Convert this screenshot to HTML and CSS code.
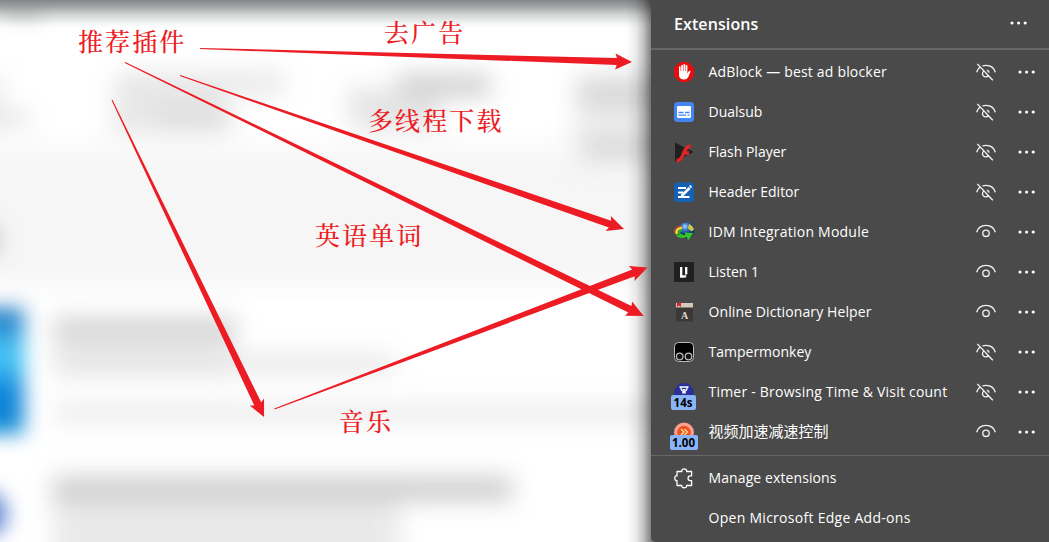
FILE: index.html
```html
<!DOCTYPE html>
<html lang="en">
<head>
<meta charset="utf-8">
<title>Extensions</title>
<link rel="stylesheet" href="styles.css">
</head>
<body>
<svg class="defs" width="0" height="0" aria-hidden="true">
  <symbol id="dots" viewBox="0 0 18 4"><circle cx="2" cy="2" r="1.55"/><circle cx="8.6" cy="2" r="1.55"/><circle cx="15.2" cy="2" r="1.55"/></symbol>
  <symbol id="eye" viewBox="0 0 22 20"><path d="M1.700 10.300C3 5.600 6.500 3.300 11 3.300s8 2.300 9.300 7"/><circle cx="11" cy="11.300" r="3.200"/></symbol>
  <symbol id="eye-off" viewBox="0 0 22 20"><path d="M1.700 10.300C2.300 8.200 3.400 6.500 4.900 5.300M7.500 3.900C8.600 3.500 9.800 3.300 11 3.300c4.500 0 8 2.300 9.300 7M2.300 1.900L17.800 18.200M8.900 9A3.200 3.200 0 1 0 13.300 13.500M11.800 8.200A3.200 3.200 0 0 1 14.100 10.600"/></symbol>
</svg>
<main class="screen">
  <section class="page">
    <svg class="backdrop" viewBox="0 0 651 542" aria-hidden="true">
      <defs>
        <filter id="soft" filterUnits="userSpaceOnUse" x="-80" y="-60" width="820" height="680" color-interpolation-filters="sRGB"><feGaussianBlur stdDeviation="10"/></filter>
        <filter id="softer" filterUnits="userSpaceOnUse" x="-80" y="-60" width="820" height="680" color-interpolation-filters="sRGB"><feGaussianBlur stdDeviation="11.500"/></filter>
        <linearGradient id="band" x2="0" y2="1"><stop offset="0" stop-color="#f6f6f6" stop-opacity="0"/><stop offset=".25" stop-color="#f6f6f6"/><stop offset=".78" stop-color="#f6f6f6"/><stop offset="1" stop-color="#f6f6f6" stop-opacity="0"/></linearGradient>
        <linearGradient id="blue" x2="0" y2="1"><stop offset="0" stop-color="#1c70bd"/><stop offset=".38" stop-color="#4accfa"/><stop offset=".7" stop-color="#0c7fd6"/><stop offset="1" stop-color="#1590d8"/></linearGradient>
        <linearGradient id="topshade" x2="0" y2="1"><stop offset="0" stop-color="#858688"/><stop offset=".2" stop-color="#a0a1a3"/><stop offset=".45" stop-color="#cfd0d0"/><stop offset=".75" stop-color="#f3f4f4"/><stop offset="1" stop-color="#fff" stop-opacity="0"/></linearGradient>
        <linearGradient id="sideshade"><stop offset="0" stop-color="#000" stop-opacity="0"/><stop offset=".4" stop-color="#000" stop-opacity=".08"/><stop offset=".7" stop-color="#000" stop-opacity=".24"/><stop offset="1" stop-color="#000" stop-opacity=".49"/></linearGradient>
      </defs>
      <rect width="651" height="542" fill="#fff"/>
      <rect y="125" width="651" height="180" fill="url(#band)"/>
      <g filter="url(#softer)" opacity=".82">
        <path d="M-60 75H5V130H-60z" fill="#ededed"/>
        <path d="M-60 112H30V126H-60z" fill="#dcdcdc"/>
        <path d="M116 72H284V94H224V134H112z" fill="#e2e2e2"/>
        <path d="M158 108H232V128H158z" fill="#d6d6d6"/>
        <path d="M346 88H395V74H490V98H440V130H352z" fill="#dfdfdf"/>
        <path d="M400 76H490V94H400z" fill="#c2c2c2"/>
        <path d="M574 74H720V165H574z" fill="#e9e9e9"/>
        <path d="M580 80H720V106H580zM585 138H720V156H585z" fill="#cecece"/>
        <path d="M-60 226H-3V254H-60z" fill="#b4b4b4"/>
        <path d="M53 316H234V378H53z" fill="#ececec"/>
        <path d="M53 318H236V342H53z" fill="#cbcbcb"/>
        <path d="M55 357H395V371H55z" fill="#dadada"/>
        <path d="M55 405H720V421H55z" fill="#e3e3e3"/>
        <path d="M53 477H512V501H53z" fill="#c2c2c2"/>
        <path d="M53 501H400V600H53z" fill="#e5e5e5"/>
      </g>
      <g filter="url(#soft)">
        <path d="M-60 308H24V434H-60z" fill="url(#blue)"/>
        <circle cx="-16" cy="514" r="23" fill="#5a83d2"/>
      </g>
      <rect width="651" height="31" fill="url(#topshade)"/>
      <ellipse cx="23" cy="11" rx="22" ry="9" fill="#7e8082" opacity=".28" filter="url(#soft)"/>
      <rect x="626" width="25" height="542" fill="url(#sideshade)"/>
    </svg>
    <svg class="arrows" viewBox="0 0 651 542" aria-hidden="true">
      <path transform="translate(200 48.500) rotate(1.790)" d="M0-.5L417-3.500 415.500-8 432.200 0 415.500 8 417 3.500 0 .5z"/>
      <path transform="translate(180 75.500) rotate(19.070)" d="M0-.5L455-3.600 453-8 469.800 0 453 8 455 3.600 0 .5z"/>
      <path transform="translate(125 62.500) rotate(26.050)" d="M0-.5L562-3.600 560.500-8 577.400 0 560.500 8 562 3.600 0 .5z"/>
      <path transform="translate(112 100) rotate(64.380)" d="M0-.5L337-3.800 335-8 351.600 0 335 8 337 3.800 0 .5z"/>
      <path transform="translate(274.500 409) rotate(-20.770)" d="M0-.5L384-3.600 382-8 398.900 0 382 8 384 3.600 0 .5z"/>
    </svg>
    <p class="note note-title" lang="zh-CN">推荐插件</p>
    <p class="note note-ads" lang="zh-CN">去广告</p>
    <p class="note note-download" lang="zh-CN">多线程下载</p>
    <p class="note note-words" lang="zh-CN">英语单词</p>
    <p class="note note-music" lang="zh-CN">音乐</p>
  </section>

  <aside class="panel">
    <header class="panel-head"><h1>Extensions</h1><svg class="dots"><use href="#dots"/></svg></header>
    <ul class="list">
      <li class="row"><span class="icon"><svg viewBox="0 0 22 22"><path fill="#e60d0d" d="M6.800 1h8.400L21 6.800v8.400L15.200 21H6.800L1 15.200V6.800z"/><path fill="#fff" d="M6 6.200q0-1 .8-1t.8 1V10h.6V4.700q0-1 .9-1t.9 1V10h.5V4q0-1 .9-1t.9 1v6h.5V5q0-1 .8-1t.8 1v7.500l1.300-2.200q.6-.8 1.500-.3.400.3.200.8L15.300 16q-1 2.500-4.300 2.500-5 0-5-5z"/></svg></span><span class="name spaced-2">AdBlock — best ad blocker</span><svg class="eye"><use href="#eye-off"/></svg><svg class="dots"><use href="#dots"/></svg></li>
      <li class="row"><span class="icon"><svg viewBox="0 0 22 22"><rect x="1" y="1" width="20" height="20" rx="3.500" fill="#4285f4"/><rect x="4" y="5" width="14" height="12" rx="1.300" fill="#fff"/><path stroke="#4285f4" stroke-width="1.300" d="M5.500 11.500h5M12 11.500h4.500M5.500 14.200h7.500M14.500 14.200h2"/></svg></span><span class="name">Dualsub</span><svg class="eye"><use href="#eye-off"/></svg><svg class="dots"><use href="#dots"/></svg></li>
      <li class="row"><span class="icon"><svg viewBox="0 0 22 22"><path fill="#202020" d="M2 1.500L20.500 11 2 20.500z"/><path fill="none" stroke="#df2426" stroke-width="3.400" d="M3.500 19.500C12 20 9 5.500 17.500 5M9.500 12H16"/></svg></span><span class="name">Flash Player</span><svg class="eye"><use href="#eye-off"/></svg><svg class="dots"><use href="#dots"/></svg></li>
      <li class="row"><span class="icon"><svg viewBox="0 0 22 22"><rect x="1" y="1.500" width="20" height="19.500" rx="3" fill="#155fb5"/><path fill="none" stroke="#fff" stroke-width="2" d="M5 7h8M5 11.500h5M5 16h11.500"/><path stroke="#fff" stroke-width="2.800" d="M9 14.500L16.500 7"/><path fill="#fff" d="M16 5l1.500-1 1.500 2-1.300 1.300zM7.500 16l1-3 2.300 2z"/></svg></span><span class="name">Header Editor</span><svg class="eye"><use href="#eye-off"/></svg><svg class="dots"><use href="#dots"/></svg></li>
      <li class="row"><span class="icon"><svg viewBox="0 0 22 22"><defs><radialGradient id="globe" cx=".4" cy=".25"><stop stop-color="#b8d6f4"/><stop offset=".4" stop-color="#3f80d0"/><stop offset="1" stop-color="#12326f"/></radialGradient></defs><circle cx="13.500" cy="9.500" r="8" fill="url(#globe)"/><path fill="#cfc845" d="M16 3q4 1.500 5 5.500l-2.500 2-3.500-3z"/><path fill="none" stroke="#d54628" stroke-width="1.300" d="M8.500 5.500C4 5 1 8 1.800 12"/><path fill="none" stroke="#f4df36" stroke-width="2.300" d="M9 7.300C5 7 2.500 9.500 4 13"/><path fill="none" stroke="#25a636" stroke-width="2.300" d="M9 9.500C5 9.500 5 14 10 14.500"/><path fill="#35c325" d="M11.500 11.500l9 .5-5.500 7.500-1-3.500c-5 2-10 1-12-3.500 3 2 7 2.500 10.500 1z"/></svg></span><span class="name spaced-3">IDM Integration Module</span><svg class="eye"><use href="#eye"/></svg><svg class="dots"><use href="#dots"/></svg></li>
      <li class="row"><span class="icon"><svg viewBox="0 0 22 22"><path fill="#202020" d="M1 1h20v20H1z"/><path fill="none" stroke="#fff" stroke-width="2.300" d="M8.200 6v9.500h3M13.200 6v7.500M10.500 15.400h2.700"/></svg></span><span class="name">Listen 1</span><svg class="eye"><use href="#eye"/></svg><svg class="dots"><use href="#dots"/></svg></li>
      <li class="row"><span class="icon"><svg viewBox="0 0 22 22"><path fill="#3b3835" d="M3 6h17v14.500H3z"/><path fill="#d5c9bc" d="M3 2h17v4.500H3z"/><path fill="#cf2938" d="M4 1.500h4V6L6 4.500 4 6z"/><text class="book-letter" x="11.500" y="17.500">A</text></svg></span><span class="name spaced-1">Online Dictionary Helper</span><svg class="eye"><use href="#eye"/></svg><svg class="dots"><use href="#dots"/></svg></li>
      <li class="row"><span class="icon"><svg viewBox="0 0 22 22"><rect x="1.500" y="1.500" width="19" height="19" rx="4" fill="#000" stroke="#bbb"/><g fill="#171717" stroke="#bbb" stroke-width="1.300"><circle cx="6.700" cy="15.500" r="3.300"/><circle cx="15.500" cy="15.500" r="3.300"/></g></svg></span><span class="name">Tampermonkey</span><svg class="eye"><use href="#eye-off"/></svg><svg class="dots"><use href="#dots"/></svg></li>
      <li class="row"><span class="icon"><svg viewBox="0 0 22 22"><circle cx="11" cy="12" r="10" fill="#29309a"/><path fill="none" stroke="#fff" stroke-width="1.400" d="M6.500 6h9M7.800 6.500Q8.500 10.500 11 10.500T14.200 6.500M9.500 12.500L11 10.500l1.500 2"/><path fill="#fff" d="M9.300 8h3.400L11 10.500z"/></svg><b class="badge">14s</b></span><span class="name spaced-timer">Timer - Browsing Time &amp; Visit count</span><svg class="eye"><use href="#eye-off"/></svg><svg class="dots"><use href="#dots"/></svg></li>
      <li class="row"><span class="icon"><svg viewBox="0 0 22 22"><circle cx="11" cy="11.500" r="10" fill="#faa08e"/><circle cx="11" cy="11.500" r="6.800" fill="#ee5023"/><path fill="none" stroke="#ffe58b" stroke-width="1.300" d="M8 8l3 3-3 3M11.500 8l3 3-3 3"/></svg><b class="badge badge-wide">1.00</b></span><span class="name cjk" lang="zh-CN">视频加速减速控制</span><svg class="eye"><use href="#eye"/></svg><svg class="dots"><use href="#dots"/></svg></li>
    </ul>
    <nav class="links">
      <a class="row"><span class="icon"><svg viewBox="0 0 22 22"><path class="puzzle" d="M4 4.500h4.800C8.100 1 14.300 1 13.600 4.500h5v4.300h-1.300c-3 0-3 4.800 0 4.800h1.300v4.900h-5c.7 3.200-5.500 3.200-4.800 0H4v-4.900C1 14.200 1 8.200 4 8.800z"/></svg></span><span class="name spaced-1">Manage extensions</span></a>
      <a class="row"><span class="icon"></span><span class="name spaced-4">Open Microsoft Edge Add-ons</span></a>
    </nav>
  </aside>
</main>
</body>
</html>
```
FILE: styles.css
```css
* { box-sizing: border-box; }
body { margin: 0; overflow: hidden; font-family: "Open Sans", "Noto Sans", "Noto Sans CJK SC", sans-serif; }
.defs { position: absolute; }
.screen { display: flex; width: 1049px; height: 542px; background: #777; }
.page { position: relative; width: 651px; height: 542px; overflow: hidden; }
.backdrop { display: block; width: 651px; height: 542px; }
.arrows { position: absolute; inset: 0; width: 651px; height: 542px; fill: #ed1c24; }
.note {
  position: absolute; margin: 0; color: #ed1c24; white-space: nowrap;
  font: 500 25px/30px "Noto Serif CJK SC", "Noto Sans CJK SC", serif; letter-spacing: 2.1px;
}
.note-title { left: 78px; top: 25px; }
.note-ads { left: 384px; top: 16px; }
.note-download { left: 368px; top: 104px; }
.note-words { left: 315px; top: 219px; }
.note-music { left: 339px; top: 405px; }

.panel { width: 398px; height: 542px; background: #4a4a4a; color: #fff; border-bottom-left-radius: 5px; }
.panel-head {
  display: flex; align-items: center; justify-content: space-between;
  height: 50px; padding: 0 21px 0 23px; border-bottom: 2px solid #666;
}
.panel-head h1 { margin: 0; font-size: 16px; font-weight: 600; line-height: 24px; letter-spacing: .1px; }
.panel-head .dots { margin-bottom: 2px; }
.list { margin: 0; padding: 2px 0 3px; list-style: none; }
.row { display: flex; align-items: center; height: 40px; padding: 0 13.5px 0 21.5px; }
.icon { position: relative; width: 22px; height: 22px; margin-right: 14px; flex: none; }
.icon svg { display: block; width: 22px; height: 22px; }
.name { flex: 1; font-size: 14px; line-height: 20px; white-space: nowrap; }
.spaced-1 { letter-spacing: .1px; }
.spaced-2 { letter-spacing: .19px; }
.spaced-3 { letter-spacing: .23px; }
.spaced-4 { letter-spacing: .28px; }
.spaced-timer { letter-spacing: .22px; }
.eye { width: 22px; height: 20px; margin-right: 20.5px; fill: none; stroke: #f2f2f2; stroke-width: 1.35; }
.dots { width: 18px; height: 4px; fill: #fff; flex: none; }
.cjk { font-family: "Noto Sans CJK SC", sans-serif; font-size: 15px; font-weight: 400; padding-bottom: 2px; }
.badge {
  position: absolute; left: -2px; top: 14px; width: 25px; height: 15px;
  background: #8ab4f8; border-radius: 2px; color: #000;
  font: 700 11.5px/16px "Open Sans", sans-serif; text-align: center;
}
.badge-wide { left: -3px; width: 28px; }
.book-letter { font: 700 10px "Liberation Serif", serif; fill: #e4ddd4; text-anchor: middle; }
.links { padding-top: 2px; border-top: 1px solid #666; }
.puzzle { fill: none; stroke: #fff; stroke-width: 1.3; stroke-linejoin: round; }
```
